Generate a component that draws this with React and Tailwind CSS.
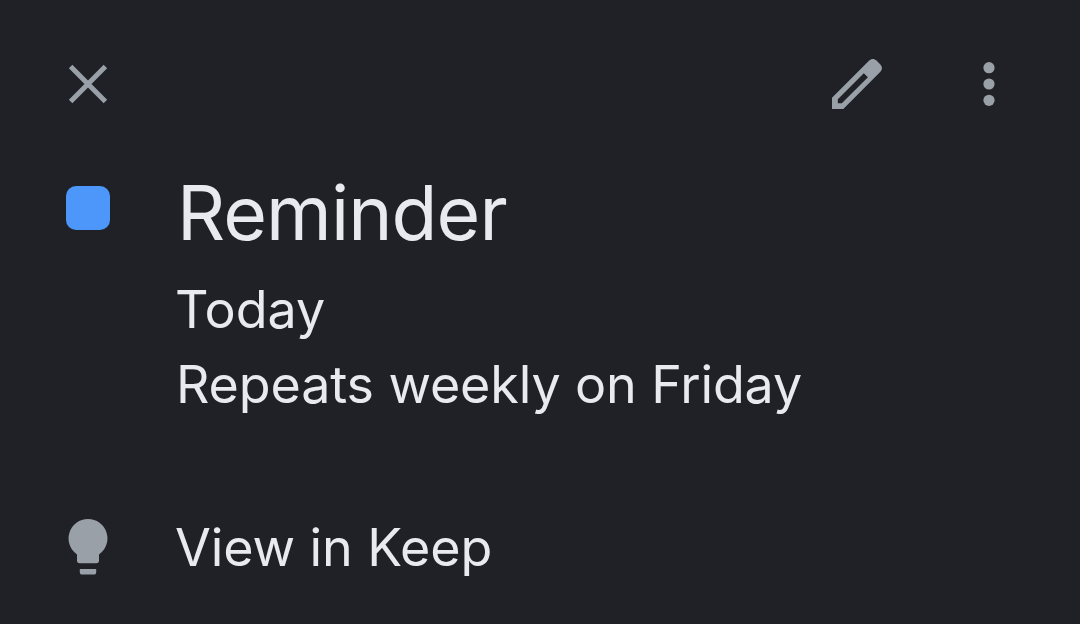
import React from "react";

const CloseIcon = () => (
  <svg className="size-11" viewBox="0 0 44 44" fill="none">
    <path d="M4.6 4.6 39.4 39.4M39.4 4.6 4.6 39.4" stroke="#9aa0a8" strokeWidth="5" />
  </svg>
);

const EditIcon = () => (
  <svg className="h-[52px] w-[52px]" viewBox="0 0 52 52" fill="#9aa0a8">
    <path
      fillRule="evenodd"
      d="M1 51V39.7L38.2 2.6C40.3.5 43.4.5 45.5 2.6L49.4 6.5C51.5 8.6 51.5 11.7 49.4 13.8L12.3 51ZM6.8 41.3V45.2H10.8L36.9 19.2L32.8 15.2Z"
    />
  </svg>
);

const MoreIcon = () => (
  <svg className="h-11 w-3" viewBox="0 0 12 44" fill="#9aa0a8">
    <circle cx="6" cy="5.7" r="5.6" />
    <circle cx="6" cy="22" r="5.6" />
    <circle cx="6" cy="38.3" r="5.6" />
  </svg>
);

const BulbIcon = () => (
  <svg className="h-14 w-11" viewBox="0 0 44 56" fill="#9aa0a8">
    <path d="M22 0A19.4 19.4 0 0 0 11 35.4V41.5Q11 44.2 13.7 44.2H30.3Q33 44.2 33 41.5V35.4A19.4 19.4 0 0 0 22 0Z" />
    <path d="M13.8 50H30.2V53Q30.2 55.6 27.6 55.6H16.4Q13.8 55.6 13.8 53Z" />
  </svg>
);

const App = () => {
  return (
    <main className="h-[624px] w-[1080px] overflow-hidden bg-[#202126] px-[66px] pt-[58px] font-['Inter',sans-serif] text-[52px] text-[#e8eaf0]">
      <header className="flex h-[52px] items-center">
        <button aria-label="Close">
          <CloseIcon />
        </button>
        <div className="ml-auto flex items-center gap-[100px] pr-[19px]">
          <button aria-label="Edit">
            <EditIcon />
          </button>
          <button aria-label="More options">
            <MoreIcon />
          </button>
        </div>
      </header>
      <section className="mt-[58px] flex gap-[66px]">
        <div className="mt-[18px] size-11 shrink-0 rounded-[10px] bg-[#4e97fa]" />
        <div className="-ml-px whitespace-nowrap">
          <h1 className="ml-0.5 text-[75px] leading-[90px] tracking-[-0.9px]">
            Reminder
          </h1>
          <p className="mt-3.5 leading-[75px]">Today</p>
          <p className="ml-px leading-[75px] tracking-[-0.13px]">
            Repeats weekly on Friday
          </p>
        </div>
      </section>
      <section className="mt-[97px] flex gap-[66px]">
        <BulbIcon />
        <p className="-ml-px leading-[58px] tracking-[-0.1px]">View in Keep</p>
      </section>
    </main>
  );
};

export default App;
